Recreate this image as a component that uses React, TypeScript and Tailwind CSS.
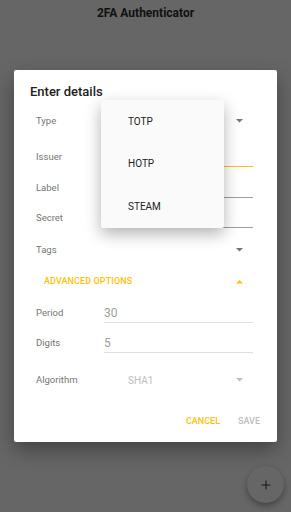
import { Plus } from 'lucide-react';

const Caret = ({ up = false, color = '#757575' }: { up?: boolean; color?: string }) => (
  <svg width="7" height="4" viewBox="0 0 7 4" className="block">
    <polygon points={up ? '0,3.5 7,3.5 3.5,0' : '0,0 7,0 3.5,3.5'} fill={color} />
  </svg>
);

const Field = ({
  label,
  h,
  value,
  line = 'border-[#9e9e9e]',
}: {
  label: string;
  h: string;
  value?: string;
  line?: string;
}) => (
  <div className={`flex items-center ${h}`}>
    <span className="w-[68px] text-[9.5px] text-[#757575]">{label}</span>
    <div className={`flex-1 h-[20px] flex items-center border-b ${line}`}>
      {value && <span className="text-[12px] text-[#9e9e9e]">{value}</span>}
    </div>
  </div>
);

export default function App() {
  return (
    <div
      className="relative w-[291px] h-[512px] overflow-hidden bg-[#666666]"
      style={{ fontFamily: 'Roboto, "Noto Sans", sans-serif' }}
    >
      <div className="h-[26px] flex items-center justify-center text-[12px] font-bold text-[#111]">
        2FA Authenticator
      </div>

      <div className="mt-[44px] ml-[14px] w-[263px] h-[372px] bg-white rounded-[2px] shadow-[0_8px_20px_rgba(0,0,0,0.35)] flex flex-col">
        <div className="pt-[14px] pl-[16px] h-[30px] text-[13px] font-medium leading-[16px] text-[#212121]">
          Enter details
        </div>

        <div className="pl-[22px] pr-[24px] flex flex-col">
          <div className="flex items-center h-[42px]">
            <span className="w-[68px] text-[9.5px] text-[#757575]">Type</span>
            <div className="flex-1 flex justify-end pr-[10px]">
              <Caret />
            </div>
          </div>

          <div className="flex items-center h-[30px]">
            <span className="w-[68px] text-[9.5px] text-[#757575]">Issuer</span>
            <div className="flex-1 h-[20px] border-b-[1.5px] border-[#ffc107]" />
          </div>

          <Field label="Label" h="h-[32px]" />
          <Field label="Secret" h="h-[28px]" />

          <div className="flex items-center h-[36px]">
            <span className="w-[68px] text-[9.5px] text-[#757575]">Tags</span>
            <div className="flex-1 flex justify-end pr-[10px]">
              <Caret />
            </div>
          </div>

          <div className="flex items-center h-[28px] pl-[8px]">
            <span className="flex-1 text-[9px] font-medium text-[#ffc107] tracking-[0.1px]">ADVANCED OPTIONS</span>
            <div className="pr-[10px]">
              <Caret up color="#ffc107" />
            </div>
          </div>

          <Field label="Period" h="h-[34px]" value="30" line="border-[#e0e0e0]" />
          <Field label="Digits" h="h-[26px]" value="5" line="border-[#e0e0e0]" />

          <div className="flex items-center h-[48px]">
            <span className="w-[92px] text-[9.5px] text-[#757575]">Algorithm</span>
            <span className="flex-1 text-[10px] text-[#bdbdbd]">SHA1</span>
            <div className="pr-[10px]">
              <Caret color="#bdbdbd" />
            </div>
          </div>
        </div>

        <div className="h-[36px] flex items-center justify-end gap-[18px] pr-[17px]">
          <span className="text-[9px] font-medium text-[#ffc107]">CANCEL</span>
          <span className="text-[9px] font-medium text-[#bdbdbd]">SAVE</span>
        </div>
      </div>

      <div className="absolute left-[101px] top-[100px] w-[123px] h-[128px] bg-[#fafafa] rounded-[2px] shadow-[0_6px_16px_rgba(0,0,0,0.3)] flex flex-col">
        {['TOTP', 'HOTP', 'STEAM'].map((t) => (
          <div key={t} className="h-[42.5px] flex items-center pl-[27px] text-[10px] text-[#212121]">
            {t}
          </div>
        ))}
      </div>

      <div className="absolute left-[247px] top-[466px] w-[37px] h-[37px] rounded-full bg-[#666666] shadow-[0_3px_6px_rgba(0,0,0,0.35)] flex items-center justify-center">
        <Plus size={14} strokeWidth={1.6} color="#111" />
      </div>
    </div>
  );
}
